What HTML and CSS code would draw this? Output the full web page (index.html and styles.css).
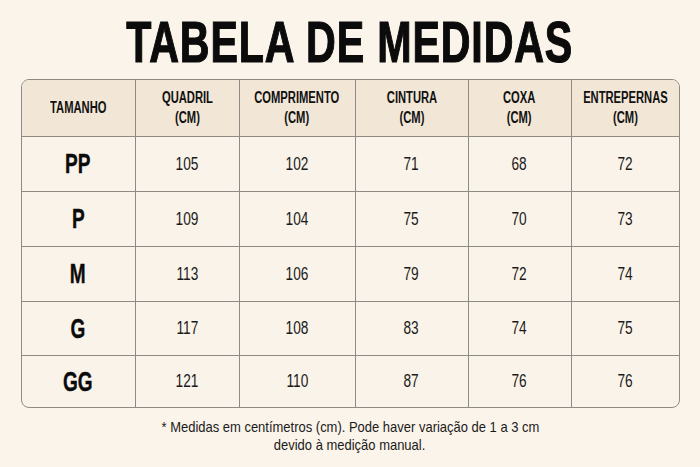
FILE: index.html
```html
<!DOCTYPE html>
<html lang="pt">
<head>
<meta charset="utf-8">
<link rel="stylesheet" href="styles.css">
</head>
<body>
<main class="page">
  <h1 class="title"><span class="cx">TABELA DE MEDIDAS</span></h1>
  <div class="table">
    <div class="cell head"><span class="cx">TAMANHO</span></div>
    <div class="cell head"><span class="cx">QUADRIL<br>(CM)</span></div>
    <div class="cell head"><span class="cx">COMPRIMENTO<br>(CM)</span></div>
    <div class="cell head"><span class="cx">CINTURA<br>(CM)</span></div>
    <div class="cell head"><span class="cx">COXA<br>(CM)</span></div>
    <div class="cell head last"><span class="cx">ENTREPERNAS<br>(CM)</span></div>

    <div class="cell size"><span class="cx">PP</span></div><div class="cell"><span class="cx">105</span></div><div class="cell"><span class="cx">102</span></div><div class="cell"><span class="cx">71</span></div><div class="cell"><span class="cx">68</span></div><div class="cell last"><span class="cx">72</span></div>
    <div class="cell size"><span class="cx">P</span></div><div class="cell"><span class="cx">109</span></div><div class="cell"><span class="cx">104</span></div><div class="cell"><span class="cx">75</span></div><div class="cell"><span class="cx">70</span></div><div class="cell last"><span class="cx">73</span></div>
    <div class="cell size"><span class="cx">M</span></div><div class="cell"><span class="cx">113</span></div><div class="cell"><span class="cx">106</span></div><div class="cell"><span class="cx">79</span></div><div class="cell"><span class="cx">72</span></div><div class="cell last"><span class="cx">74</span></div>
    <div class="cell size"><span class="cx">G</span></div><div class="cell"><span class="cx">117</span></div><div class="cell"><span class="cx">108</span></div><div class="cell"><span class="cx">83</span></div><div class="cell"><span class="cx">74</span></div><div class="cell last"><span class="cx">75</span></div>
    <div class="cell size bottom"><span class="cx">GG</span></div><div class="cell bottom"><span class="cx">121</span></div><div class="cell bottom"><span class="cx">110</span></div><div class="cell bottom"><span class="cx">87</span></div><div class="cell bottom"><span class="cx">76</span></div><div class="cell last bottom"><span class="cx">76</span></div>
  </div>
  <p class="note"><span class="cx">* Medidas em centímetros (cm). Pode haver variação de 1 a 3 cm</span><br><span class="cx">devido à medição manual.</span></p>
</main>
</body>
</html>
```
FILE: styles.css
```css
html, body {
  margin: 0;
  padding: 0;
  background: #faf4eb;
}
.page {
  width: 700px;
  height: 467px;
  display: flex;
  flex-direction: column;
  align-items: center;
  font-family: "Liberation Sans", Arial, sans-serif;
  color: #111;
}
.cx {
  display: inline-block;
  white-space: nowrap;
  transform: scaleX(var(--sx, 0.75));
}
.title {
  margin: 0;
  height: 79px;
  line-height: 84px;
  font-size: 58px;
  font-weight: 700;
  letter-spacing: 1.2px;
  color: #0b0b0b;
  -webkit-text-stroke: 1.2px #0b0b0b;
  --sx: 0.71;
}
.table {
  display: grid;
  grid-template-columns: 114px 104px 116px 113px 103px 107px;
  grid-template-rows: 57px 55px 55px 55px 54px 51px;
  border: 1px solid #8d8b86;
  border-radius: 8px;
  overflow: hidden;
  background: #faf3e9;
}
.cell {
  display: flex;
  align-items: center;
  justify-content: center;
  text-align: center;
  border-right: 1px solid #8d8b86;
  border-bottom: 1px solid #8d8b86;
  font-size: 18px;
  color: #1a1a1a;
  --sx: 0.76;
}
.cell.last { border-right: none; }
.cell.bottom { border-bottom: none; }
.head {
  background: #f2e7d7;
  font-size: 16px;
  font-weight: 700;
  line-height: 20px;
  color: #111;
  --sx: 0.7;
}
.size {
  font-size: 28px;
  font-weight: 700;
  color: #0b0b0b;
  -webkit-text-stroke: 0.4px #0b0b0b;
  --sx: 0.68;
}
.note {
  margin: 10px 0 0;
  font-size: 15px;
  line-height: 18px;
  text-align: center;
  color: #1a1a1a;
  --sx: 0.865;
}
```
